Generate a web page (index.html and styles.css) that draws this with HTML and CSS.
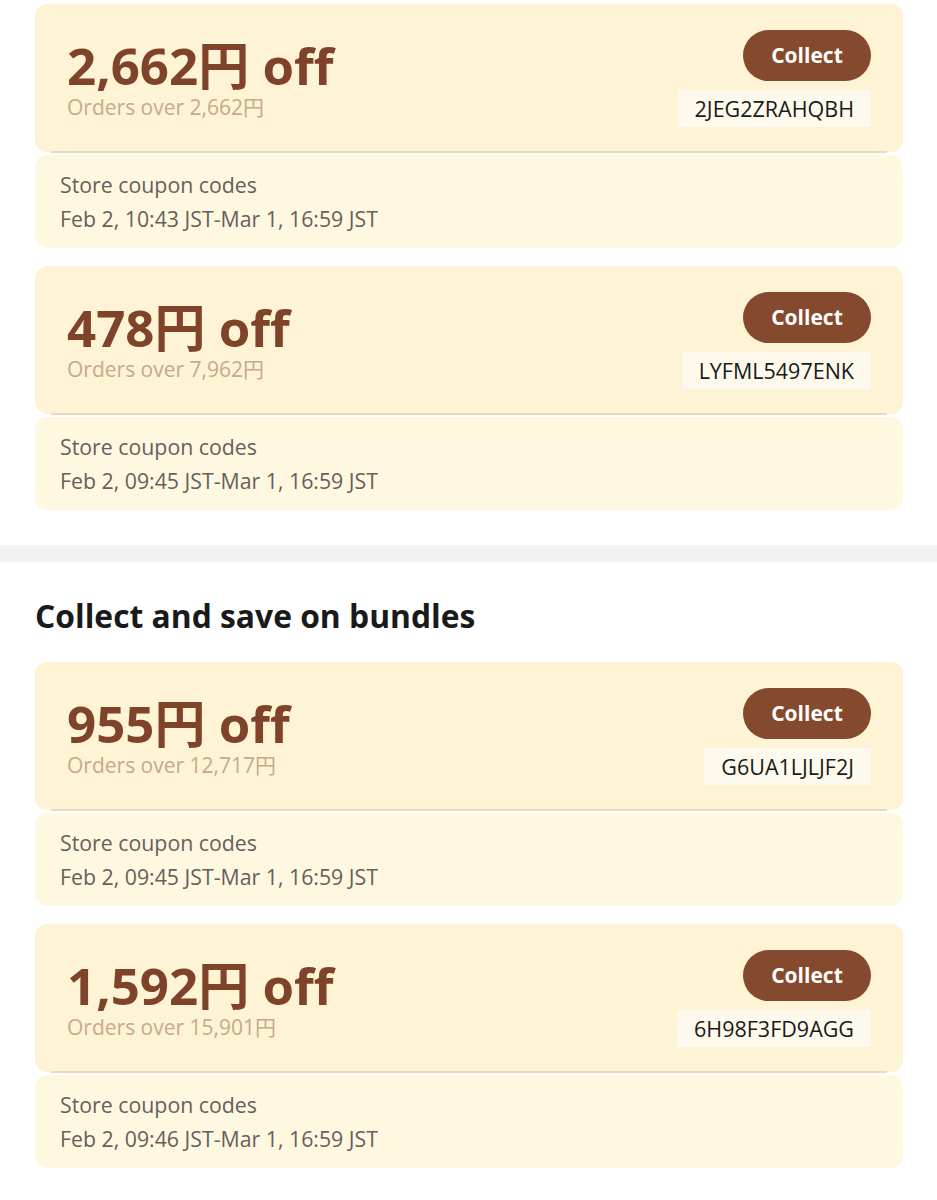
FILE: index.html
```html
<!DOCTYPE html>
<html lang="en">
<head>
    <meta charset="UTF-8">
    <meta name="viewport" content="width=device-width, initial-scale=1.0">
    <title>Coupons</title>
    <link rel="stylesheet" href="styles.css">
</head>
<body>
    <section class="coupon-section first">
        <div class="coupon">
            <div class="coupon-main">
                <div class="coupon-info">
                    <div class="coupon-amount">2,662円 off</div>
                    <div class="coupon-min">Orders over 2,662円</div>
                </div>
                <div class="coupon-actions">
                    <button class="collect-btn">Collect</button>
                    <div class="coupon-code">2JEG2ZRAHQBH</div>
                </div>
            </div>
            <div class="coupon-meta">
                <div>Store coupon codes</div>
                <div>Feb 2, 10:43 JST-Mar 1, 16:59 JST</div>
            </div>
        </div>

        <div class="coupon">
            <div class="coupon-main">
                <div class="coupon-info">
                    <div class="coupon-amount">478円 off</div>
                    <div class="coupon-min">Orders over 7,962円</div>
                </div>
                <div class="coupon-actions">
                    <button class="collect-btn">Collect</button>
                    <div class="coupon-code">LYFML5497ENK</div>
                </div>
            </div>
            <div class="coupon-meta">
                <div>Store coupon codes</div>
                <div>Feb 2, 09:45 JST-Mar 1, 16:59 JST</div>
            </div>
        </div>
    </section>

    <div class="divider"></div>

    <section class="coupon-section">
        <h2>Collect and save on bundles</h2>

        <div class="coupon">
            <div class="coupon-main">
                <div class="coupon-info">
                    <div class="coupon-amount">955円 off</div>
                    <div class="coupon-min">Orders over 12,717円</div>
                </div>
                <div class="coupon-actions">
                    <button class="collect-btn">Collect</button>
                    <div class="coupon-code">G6UA1LJLJF2J</div>
                </div>
            </div>
            <div class="coupon-meta">
                <div>Store coupon codes</div>
                <div>Feb 2, 09:45 JST-Mar 1, 16:59 JST</div>
            </div>
        </div>

        <div class="coupon">
            <div class="coupon-main">
                <div class="coupon-info">
                    <div class="coupon-amount">1,592円 off</div>
                    <div class="coupon-min">Orders over 15,901円</div>
                </div>
                <div class="coupon-actions">
                    <button class="collect-btn">Collect</button>
                    <div class="coupon-code">6H98F3FD9AGG</div>
                </div>
            </div>
            <div class="coupon-meta">
                <div>Store coupon codes</div>
                <div>Feb 2, 09:46 JST-Mar 1, 16:59 JST</div>
            </div>
        </div>
    </section>
</body>
</html>
```

FILE: styles.css
```css
body {
    margin: 0;
    background-color: #FFFFFF;
    font-family: "Open Sans", "Noto Sans CJK JP", sans-serif;
}

.coupon-section {
    display: flex;
    flex-direction: column;
    gap: 18px;
    padding: 0 34px 0 35px;
}

.coupon-section.first {
    padding-top: 4px;
    padding-bottom: 35px;
}

h2 {
    margin: 34px 0 8px;
    font-size: 31.8px;
    line-height: 40px;
    font-weight: 700;
    color: #1A1A1A;
}

.divider {
    height: 17px;
    background-color: #F2F2F2;
}

.coupon {
    display: flex;
    flex-direction: column;
    gap: 3px;
}

.coupon-main {
    position: relative;
    display: flex;
    justify-content: space-between;
    align-items: center;
    height: 148px;
    padding: 0 32px;
    box-sizing: border-box;
    background-color: #FEF3D4;
    border-radius: 12px;
}

.coupon-main::after {
    content: "";
    position: absolute;
    left: 16px;
    right: 16px;
    bottom: -1px;
    height: 2px;
    background-color: #EAD9BC;
}

.coupon-info {
    margin-top: 4px;
}

.coupon-amount {
    font-size: 51px;
    line-height: 46px;
    font-weight: 700;
    color: #7E4328;
}

.coupon-min {
    margin-top: 7px;
    font-size: 21px;
    line-height: 24px;
    color: #C6AA8A;
}

.coupon-actions {
    display: flex;
    flex-direction: column;
    align-items: flex-end;
    gap: 9px;
}

.collect-btn {
    width: 128px;
    height: 51px;
    border: none;
    border-radius: 26px;
    background-color: #854A2D;
    color: #FFFFFF;
    font-family: "Open Sans", sans-serif;
    font-size: 21px;
    font-weight: 700;
    cursor: pointer;
}

.coupon-code {
    padding: 0 17px;
    height: 37px;
    line-height: 37px;
    background-color: #FDF9EC;
    font-size: 21.5px;
    color: #1A1A1A;
}

.coupon-meta {
    padding: 13px 25px 12px;
    background-color: #FFF8E1;
    border-radius: 12px;
    font-size: 21.3px;
    line-height: 34px;
    color: #66605B;
}
```
